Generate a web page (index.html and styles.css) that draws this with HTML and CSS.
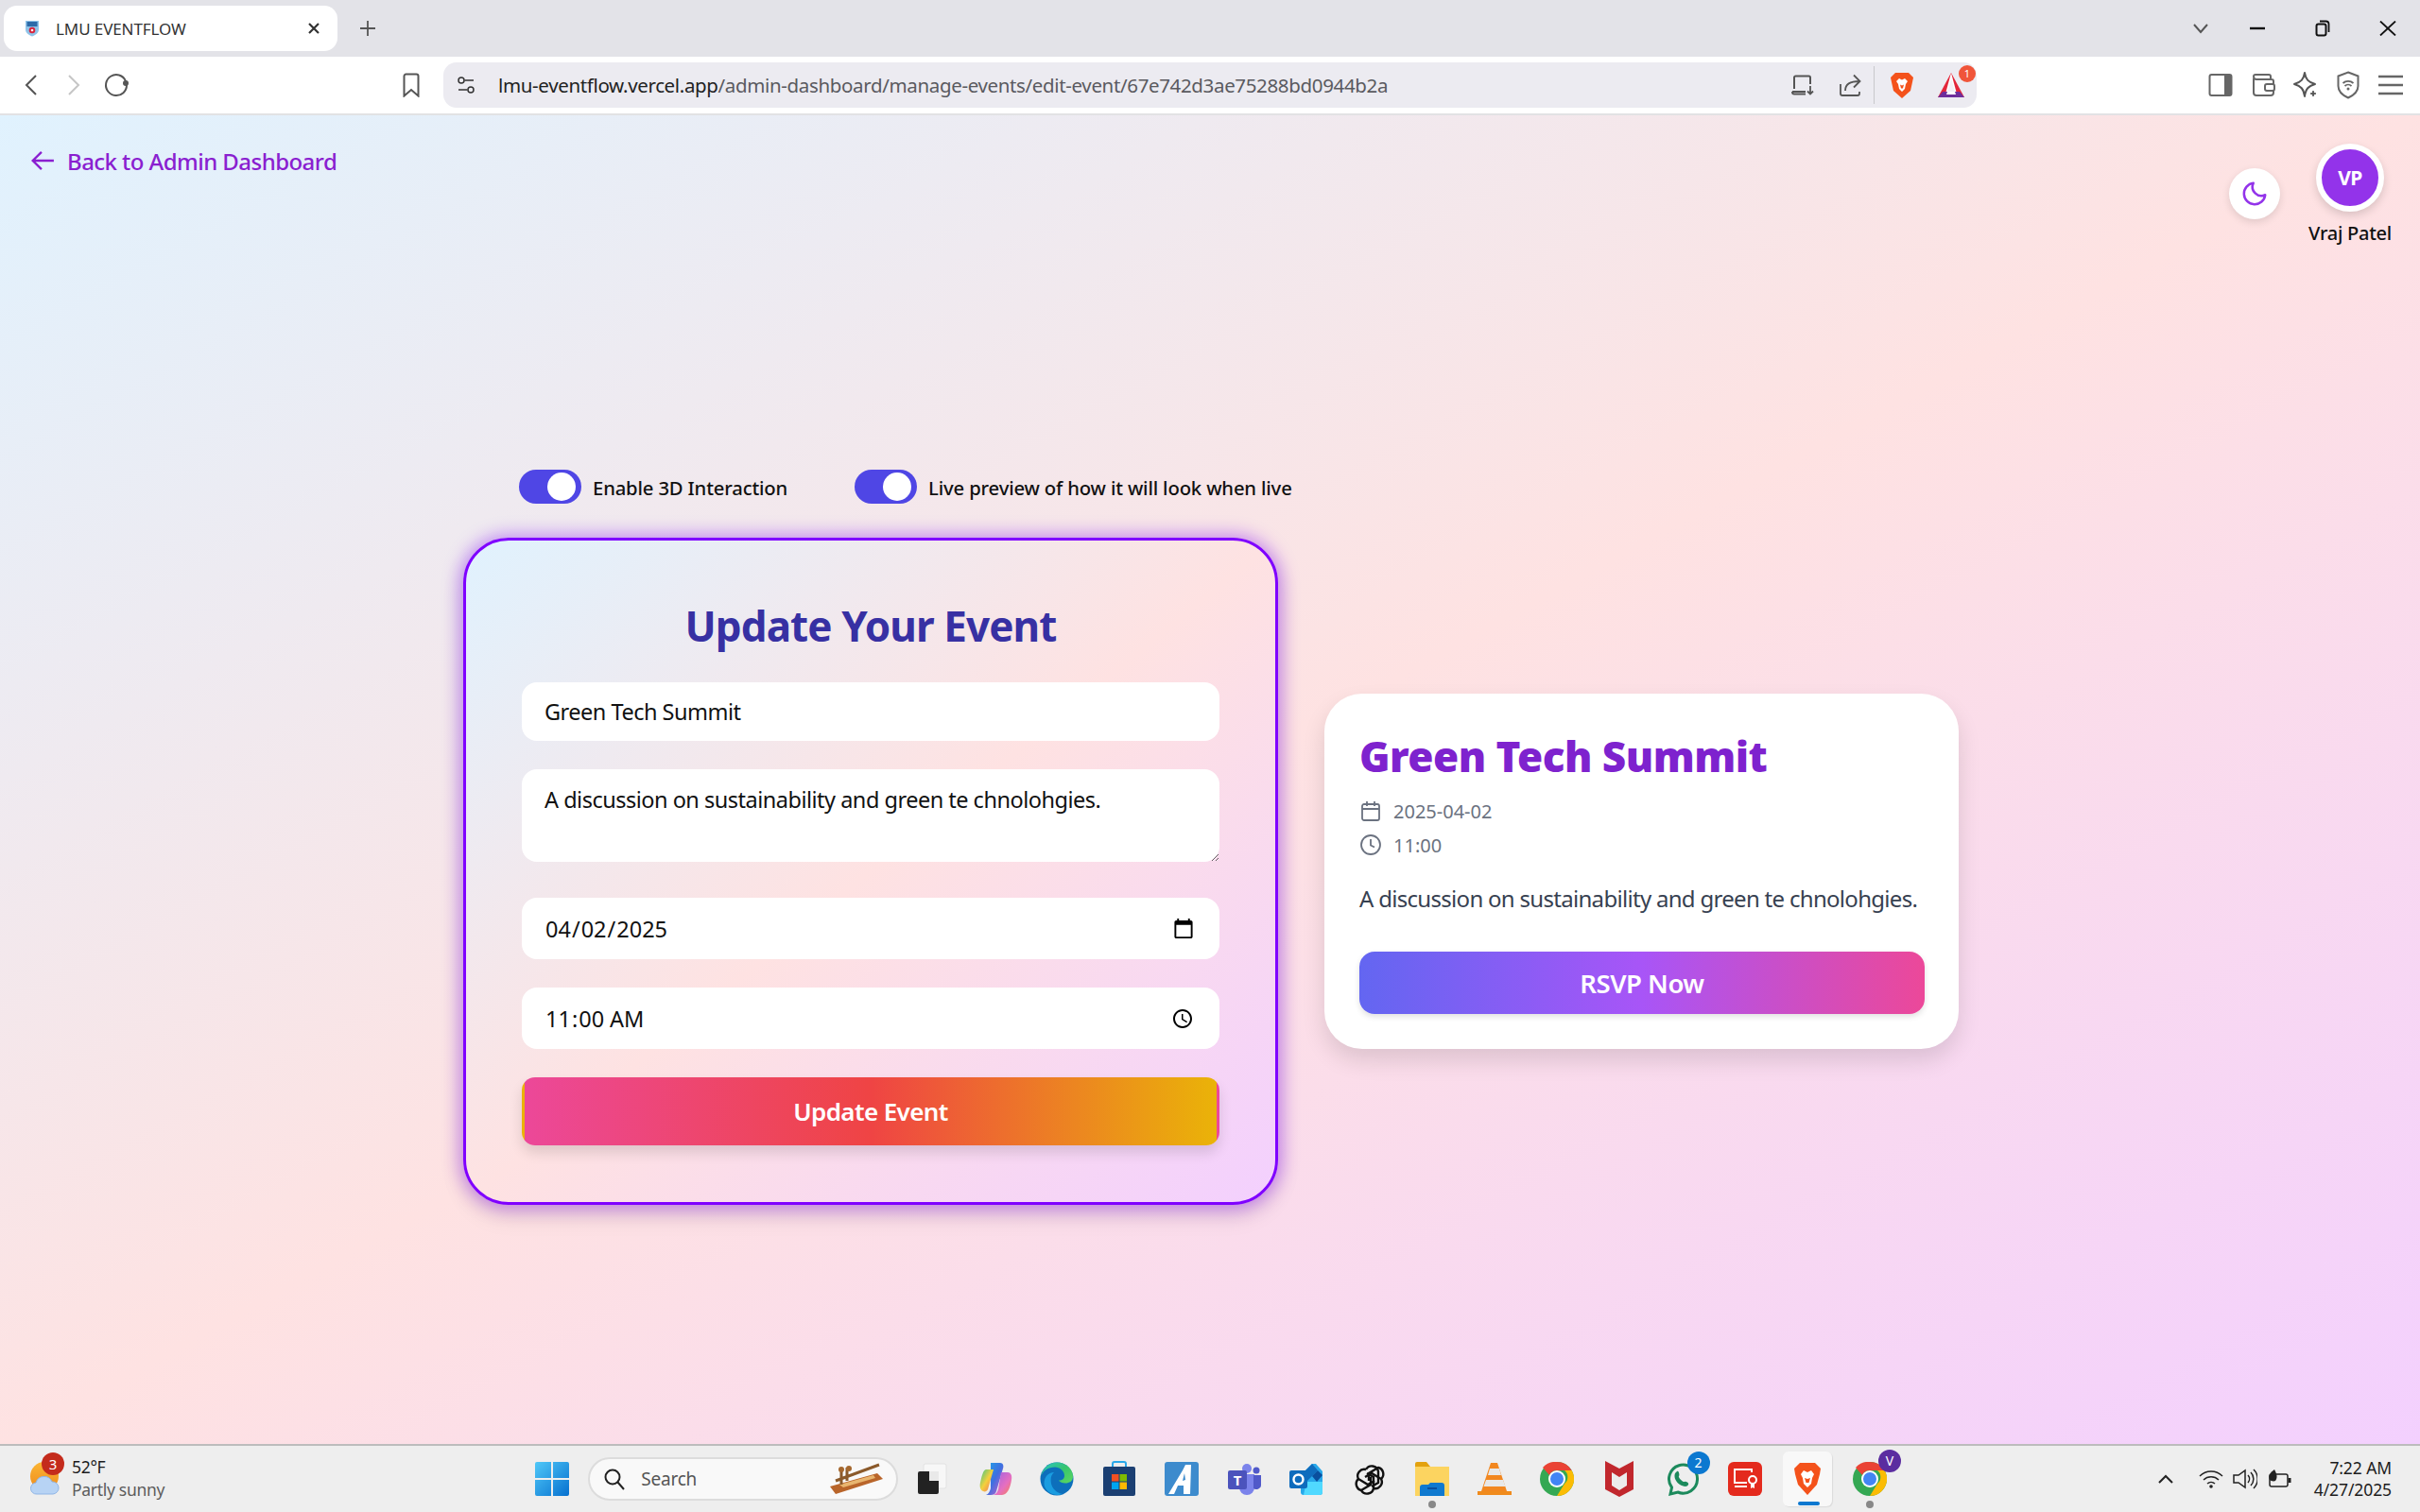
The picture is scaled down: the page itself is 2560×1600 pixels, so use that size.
FILE: index.html
```html
<!DOCTYPE html>
<html lang="en">
<head>
<meta charset="utf-8">
<title>LMU EVENTFLOW</title>
<link rel="stylesheet" href="styles.css">
</head>
<body>
<div class="screen">
  <div class="tabstrip">
    <div class="tab">
      <svg class="favicon" viewBox="0 0 16 18" width="16" height="18"><path d="M1 1h14v9c0 4-3.500 6-7 7.500C4.500 16 1 14 1 10z" fill="#8fc3e8"/><path d="M2.500 2h11v5h-11z" fill="#2d6aa8"/><circle cx="8" cy="11" r="3.300" fill="#d8243c"/><circle cx="8" cy="11" r="1.300" fill="#fff"/></svg>
      <span class="tab-title">LMU EVENTFLOW</span>
      <svg class="tab-close" viewBox="0 0 14 14" width="14" height="14"><path d="M2 2l10 10M12 2L2 12" stroke="#333" stroke-width="2.200"/></svg>
    </div>
    <svg class="tab-new" viewBox="0 0 18 18" width="18" height="18"><path d="M9 1v16M1 9h16" stroke="#555" stroke-width="1.800"/></svg>
    <div class="window-controls">
      <span class="win-slot"><svg viewBox="0 0 18 12" width="18" height="12"><path d="M2 2l7 8 7-8" fill="none" stroke="#555" stroke-width="2"/></svg></span>
      <span class="win-slot shift-l"><svg viewBox="0 0 16 4" width="16" height="4"><path d="M0 2h16" stroke="#111" stroke-width="2.400"/></svg></span>
      <span class="win-slot shift-s"><svg viewBox="0 0 16 18" width="16" height="18"><rect x="1.500" y="4.500" width="10" height="12" rx="2" fill="none" stroke="#111" stroke-width="2"/><path d="M5 1.500h6.500a3 3 0 0 1 3 3V13" fill="none" stroke="#111" stroke-width="1.800"/></svg></span>
      <span class="win-slot"><svg viewBox="0 0 18 16" width="18" height="16"><path d="M1 0.500l16 15M17 0.500l-16 15" stroke="#111" stroke-width="1.800"/></svg></span>
    </div>
  </div>

  <div class="toolbar">
    <span class="tool-slot"><svg viewBox="0 0 16 24" width="16" height="24"><path d="M13 2L3 12l10 10" fill="none" stroke="#555" stroke-width="2"/></svg></span>
    <span class="tool-slot"><svg viewBox="0 0 16 24" width="16" height="24"><path d="M3 2l10 10L3 22" fill="none" stroke="#c6c6c6" stroke-width="2"/></svg></span>
    <span class="tool-slot"><svg viewBox="0 0 26 26" width="26" height="26"><path d="M16 2.500A11 11 0 1 0 24 13" fill="none" stroke="#555" stroke-width="2"/><path d="M16 2.500A11 11 0 0 1 23 9" fill="none" stroke="#555" stroke-width="2"/><circle cx="23" cy="11" r="3" fill="#555"/></svg></span>
    <span class="tool-slot bookmark"><svg viewBox="0 0 20 26" width="20" height="26"><path d="M2.500 3.500a2 2 0 0 1 2-2h11a2 2 0 0 1 2 2v21L10 18l-7.500 6.500z" fill="none" stroke="#555" stroke-width="2"/></svg></span>
    <div class="address">
      <svg class="addr-site" viewBox="0 0 18 18" width="18" height="18"><circle cx="4" cy="4" r="3" fill="none" stroke="#333" stroke-width="1.500"/><path d="M7.500 4H17M1 14h9.500" stroke="#333" stroke-width="1.500"/><circle cx="14" cy="14" r="3" fill="none" stroke="#333" stroke-width="1.500"/></svg>
      <span class="url"><span class="url-host">lmu-eventflow.vercel.app</span>/admin-dashboard/manage-events/edit-event/67e742d3ae75288bd0944b2a</span>
      <div class="addr-actions">
        <svg viewBox="0 0 26 26" width="26" height="26"><path d="M4 17V5a1.500 1.500 0 0 1 1.500-1.500h14A1.500 1.500 0 0 1 21 5v7M2 20h14M2 20c0 1.500 1 2.500 2 2.500h12" fill="none" stroke="#555" stroke-width="2"/><path d="M21 14v8M18 19.500l3 3 3-3" fill="none" stroke="#555" stroke-width="1.800"/></svg>
        <svg viewBox="0 0 26 26" width="26" height="26"><path d="M3 12v10a2 2 0 0 0 2 2h16a2 2 0 0 0 2-2v-2M8 19c0-7 5-10 15-10M17 2.500l6.500 6.500-6.500 6.500" fill="none" stroke="#555" stroke-width="1.800"/></svg>
        <span class="addr-sep"></span>
        <svg viewBox="0 0 26 30" width="26" height="30"><path d="M6 2h14l3 3 2 2-1 5-2 9-9 8-9-8-2-9-1-5 2-2z" fill="#f4521b"/><path d="M7 11l3-3 3 1.500L16 8l3 3-2 3-1 5-3 3-3-3-1-5z" fill="#fff"/><path d="M11 14.500l2 1 2-1-1 4h-2z" fill="#f4521b"/></svg>
        <span class="rewards"><svg viewBox="0 0 30 30" width="30" height="30"><path d="M15 2L29 28H1z" fill="#e3263a"/><path d="M15 2L22 28H8z" fill="#fff"/><path d="M15 8l4 14h-8z" fill="#f3f0f7"/><path d="M6 22h18l5 6H1z" fill="#6e2e9b"/><path d="M11 22h8l1 3h-10z" fill="#fff"/></svg><span class="badge-brave">1</span></span>
      </div>
    </div>
    <div class="tool-right">
      <span class="tool-slot"><svg viewBox="0 0 26 26" width="26" height="26"><rect x="1.500" y="2" width="23" height="22" rx="2" fill="none" stroke="#666" stroke-width="2"/><rect x="17" y="2" width="7" height="22" fill="#666"/></svg></span>
      <span class="tool-slot"><svg viewBox="0 0 26 26" width="26" height="26"><path d="M3 6V21a3 3 0 0 0 3 3h15a3 3 0 0 0 3-3V9a2 2 0 0 0-2-2H6a3 3 0 0 1-3-3 2 2 0 0 1 2-2h14a2 2 0 0 1 2 2v3" fill="none" stroke="#666" stroke-width="2"/><rect x="15" y="12" width="10" height="7" rx="2" fill="#fff" stroke="#666" stroke-width="2"/></svg></span>
      <span class="tool-slot"><svg viewBox="0 0 28 30" width="28" height="30"><path d="M13 2c1 7 4 10 11 12-7 2-10 5-11 13-1-8-4-11-11-13 7-2 10-5 11-12z" fill="none" stroke="#555" stroke-width="2" stroke-linejoin="round"/><path d="M22 21c.4 2 1 2.700 3 3-2 .5-2.600 1-3 3-.4-2-1-2.500-3-3 2-.3 2.600-1 3-3z" fill="#555" stroke="#555"/></svg></span>
      <span class="tool-slot"><svg viewBox="0 0 26 30" width="26" height="30"><path d="M13 1.500l10.500 4V16c0 6-5 10-10.500 12.500C7.500 26 2.500 22 2.500 16V5.500z" fill="none" stroke="#666" stroke-width="2"/><path d="M7.500 13a8 8 0 0 1 11 0M9.500 16a5 5 0 0 1 7 0" fill="none" stroke="#666" stroke-width="1.800"/><circle cx="13" cy="19" r="1.500" fill="#666"/></svg></span>
      <span class="tool-slot"><svg viewBox="0 0 26 22" width="26" height="22"><path d="M0 2h26M0 11h26M0 20h26" stroke="#666" stroke-width="2.400"/></svg></span>
    </div>
  </div>

  <main class="page">
    <header class="topbar">
      <a class="back-link" href="#">
        <svg viewBox="0 0 24 24" width="26" height="26"><path d="M23 12H2M11 3.500L2.500 12l8.500 8.500" fill="none" stroke="#8a1fd0" stroke-width="2.200"/></svg>
        <span>Back to Admin Dashboard</span>
      </a>
      <div class="top-actions">
        <button class="theme-btn" type="button"><svg viewBox="0 0 24 24" width="30" height="30"><path d="M11 3a9 9 0 1 0 10 10 7.500 7.500 0 0 1-10-10z" fill="none" stroke="#9333ea" stroke-width="2" stroke-linejoin="round"/></svg></button>
        <div class="user">
          <div class="avatar">VP</div>
          <div class="user-name">Vraj Patel</div>
        </div>
      </div>
    </header>

    <section class="stage">
      <div class="toggles">
        <label class="toggle"><span class="switch"><span class="knob"></span></span><span>Enable 3D Interaction</span></label>
        <label class="toggle"><span class="switch"><span class="knob"></span></span><span>Live preview of how it will look when live</span></label>
      </div>
      <div class="editor">
        <form class="form-card">
          <h1 class="form-title">Update Your Event</h1>
          <input class="field field-title" type="text" value="Green Tech Summit">
          <textarea class="field field-area">A discussion on sustainability and green te chnolohgies.</textarea>
          <input class="field field-dt" type="date" value="2025-04-02">
          <input class="field field-dt" type="time" value="11:00">
          <button class="submit" type="button">Update Event</button>
        </form>
        <article class="preview">
          <h2 class="preview-title">Green Tech Summit</h2>
          <div class="meta">
            <svg viewBox="0 0 24 24" width="24" height="24"><rect x="3" y="5" width="18" height="17" rx="2" fill="none" stroke="#6b7280" stroke-width="1.800"/><path d="M3 10h18M8 2v5M16 2v5" stroke="#6b7280" stroke-width="1.800"/></svg>
            <span>2025-04-02</span>
          </div>
          <div class="meta">
            <svg viewBox="0 0 24 24" width="24" height="24"><circle cx="12" cy="12" r="10" fill="none" stroke="#6b7280" stroke-width="1.800"/><path d="M12 6v6.500l4 2" fill="none" stroke="#6b7280" stroke-width="1.800"/></svg>
            <span>11:00</span>
          </div>
          <p class="preview-desc">A discussion on sustainability and green te chnolohgies.</p>
          <button class="rsvp" type="button">RSVP Now</button>
        </article>
      </div>
    </section>
  </main>

  <footer class="taskbar">
    <div class="weather">
      <div class="weather-icon">
        <svg viewBox="0 0 36 36" width="36" height="36"><defs><linearGradient id="sun" x1="0" y1="0" x2="0" y2="1"><stop offset="0" stop-color="#fbb634"/><stop offset="1" stop-color="#ee8a1c"/></linearGradient></defs><circle cx="17" cy="15" r="15" fill="url(#sun)"/><path d="M9 34a6 6 0 0 1-1-12 9 9 0 0 1 17-1 6.500 6.500 0 0 1 1 13z" fill="#b7d3f4" stroke="#8fb5e6"/></svg>
        <span class="weather-badge">3</span>
      </div>
      <div class="weather-text">
        <div class="weather-temp">52°F</div>
        <div class="weather-desc">Partly sunny</div>
      </div>
    </div>
    <span class="task-slot"><svg viewBox="0 0 36 36" width="36" height="36"><defs><linearGradient id="win" x1="0" y1="0" x2="1" y2="1"><stop offset="0" stop-color="#4fc8f8"/><stop offset="1" stop-color="#0670cf"/></linearGradient></defs><path d="M0 2a2 2 0 0 1 2-2h15v17H0zM19 0h15a2 2 0 0 1 2 2v15H19zM0 19h17v17H2a2 2 0 0 1-2-2zM19 19h17v15a2 2 0 0 1-2 2H19z" fill="url(#win)"/></svg></span>
    <div class="search">
      <svg viewBox="0 0 24 24" width="24" height="24"><circle cx="10" cy="10" r="7.500" fill="none" stroke="#222" stroke-width="2"/><path d="M15.500 15.500L22 23" stroke="#222" stroke-width="2"/></svg>
      <span class="search-text">Search</span>
      <svg class="search-art" viewBox="0 0 60 36" width="60" height="36"><path d="M2 26l50-14 6 6-50 16z" fill="#b9652a"/><path d="M12 24l36-10 2 3-34 10z" fill="#e8b56f"/><path d="M8 20l46-17M14 8v16M20 6v14" stroke="#8b5a2b" stroke-width="3"/><circle cx="14" cy="8" r="3" fill="#a5682f"/><circle cx="22" cy="7" r="3" fill="#a5682f"/></svg>
    </div>
    <span class="task-slot nudge"><svg viewBox="0 0 36 36" width="36" height="36"><rect x="8" y="2" width="24" height="26" rx="2" fill="#f7f7f7" stroke="#e2e2e2"/><rect x="2" y="10" width="22" height="24" rx="2" fill="#222"/><rect x="14" y="10" width="10" height="10" fill="#e9e9e9"/></svg></span>
    <span class="task-slot nudge"><svg viewBox="0 0 36 36" width="36" height="36"><defs><linearGradient id="cp1" x1="0" y1="0" x2="1" y2="1"><stop offset="0" stop-color="#20a4e8"/><stop offset="0.5" stop-color="#3f6fe0"/><stop offset="1" stop-color="#d95dc8"/></linearGradient><linearGradient id="cp2" x1="0" y1="0" x2="1" y2="1"><stop offset="0" stop-color="#37c58a"/><stop offset="0.5" stop-color="#f4d13d"/><stop offset="1" stop-color="#f3655a"/></linearGradient><linearGradient id="cp3" x1="0" y1="0" x2="1" y2="1"><stop offset="0" stop-color="#9a62e6"/><stop offset="0.6" stop-color="#e66fc0"/><stop offset="1" stop-color="#f7804f"/></linearGradient></defs><path d="M13 1h10c3 0 4 3 3 6l-7 24c-1 3-3 4-6 4H8c3-1 4-4 5-7z" fill="url(#cp1)"/><path d="M8 8h8l-6 21c-1 2-3 3-5 2-3-1-4-5-3-9 1-5 3-14 6-14z" fill="url(#cp2)"/><path d="M24 11h7c3 0 5 3 4 8-1 7-4 16-10 16h-9c3-1 4-3 5-6z" fill="url(#cp3)"/></svg></span>
    <span class="task-slot"><svg viewBox="0 0 36 36" width="36" height="36"><defs><linearGradient id="edge" x1="0" y1="0" x2="1" y2="1"><stop offset="0" stop-color="#2dc3c8"/><stop offset="0.5" stop-color="#35c46f"/><stop offset="1" stop-color="#5ed85e"/></linearGradient></defs><circle cx="18" cy="18" r="17.500" fill="#0d6fbb"/><path d="M1 16C3 6 10 .5 18 .5c10 0 17 7 17 15 0 5-4 7-8 7-3 0-6-1-7-3 4 0 6-2 6-5 0-5-5-9-10-9C9 5.500 3 9 1 16z" fill="url(#edge)"/><path d="M5 26c-2-8 3-15 10-15-3 3-4 6-3 12 1 5 6 10 12 11-8 3-16-1-19-8z" fill="#1a9ce0"/></svg></span>
    <span class="task-slot"><svg viewBox="0 0 36 38" width="36" height="38"><path d="M11 7V3a2 2 0 0 1 2-2h10a2 2 0 0 1 2 2v4" fill="none" stroke="#28a8ea" stroke-width="2"/><rect x="1" y="6" width="34" height="31" rx="2" fill="#1b3f72"/><rect x="10" y="14" width="7.500" height="7.500" fill="#f25022"/><rect x="18.500" y="14" width="7.500" height="7.500" fill="#7fba00"/><rect x="10" y="22.500" width="7.500" height="7.500" fill="#00a4ef"/><rect x="18.500" y="22.500" width="7.500" height="7.500" fill="#ffb900"/></svg></span>
    <span class="task-slot"><svg viewBox="0 0 36 36" width="36" height="36"><rect width="36" height="36" rx="3" fill="#3d8bcd"/><path d="M4 34L19 9l3-6 6 0-1 31h-7l0-9-6 0-4 9z" fill="#fff"/><path d="M19 20l3-1-1-7z" fill="#3d8bcd"/></svg></span>
    <span class="task-slot"><svg viewBox="0 0 36 36" width="36" height="36"><circle cx="21" cy="7" r="5" fill="#7b83eb"/><circle cx="31" cy="9" r="3.500" fill="#5059c9"/><path d="M13 13h16v14a8 8 0 0 1-16 0z" fill="#7b83eb"/><path d="M28 14h8v11a5 5 0 0 1-8 3z" fill="#5059c9"/><rect x="1" y="9" width="20" height="20" rx="2" fill="#4b53bc"/><text x="11" y="25" class="svg-t">T</text></svg></span>
    <span class="task-slot"><svg viewBox="0 0 36 36" width="36" height="36"><path d="M12 14L24 2h4l7 8v22a3 3 0 0 1-3 3H15a3 3 0 0 1-3-3z" fill="#28a8ea"/><path d="M12 14L24 2l6 7-12 12z" fill="#0f6cbd"/><path d="M24 15l6-6 5 5-6 7z" fill="#0a4f9e"/><path d="M18 21h17v11a3 3 0 0 1-3 3H15z" fill="#50d9ff"/><rect x="0" y="9" width="19" height="19" rx="2" fill="#0f6cbd"/><circle cx="9.500" cy="18.500" r="5" fill="none" stroke="#fff" stroke-width="2.400"/></svg></span>
    <span class="task-slot"><svg viewBox="0 0 36 38" width="36" height="38"><g fill="none" stroke="#111" stroke-width="2.400"><path d="M14 9a7 7 0 0 1 13 2v12l-7 4"/><path d="M14 9a7 7 0 0 0-8 10l10 6 7-4"/><path d="M6 19a7 7 0 0 0 3 12l10-6v-8"/><path d="M9 31a7 7 0 0 0 13-2V17l-7-4"/><path d="M22 29a7 7 0 0 0 8-10l-10-6-7 4"/><path d="M30 19a7 7 0 0 0-3-12l-10 6v8"/></g></svg></span>
    <span class="task-slot"><svg viewBox="0 0 36 36" width="36" height="36"><path d="M0 2a2 2 0 0 1 2-2h10l4 5h-16z" fill="#e3a20f"/><rect y="5" width="36" height="31" fill="#fcd460"/><path d="M5 36V27a3 3 0 0 1 3-3h6l2-2h12a3 3 0 0 1 3 3v11z" fill="#0f79cf"/><rect x="13" y="27" width="10" height="2" fill="#0a4f9e"/></svg><i class="dot"></i></span>
    <span class="task-slot"><svg viewBox="0 0 36 38" width="36" height="38"><path d="M14 2h7l10 30H4z" fill="#f2871f"/><path d="M13 8h10l2 7H11zM9 20h18l2.500 7h-23z" fill="#e8e8e8"/><path d="M0 32h36v4H0z" fill="#f08b1c"/></svg></span>
    <span class="task-slot"><svg viewBox="0 0 36 36" width="36" height="36"><circle cx="18" cy="18" r="18" fill="#34a853"/><path d="M18 0a18 18 0 0 1 15.600 9H18a9 9 0 0 0-8 5L3 6A18 18 0 0 1 18 0z" fill="#ea4335"/><path d="M33.600 9A18 18 0 0 1 18 36l8-13a9 9 0 0 0 0-14z" fill="#fbbc04"/><circle cx="18" cy="18" r="9" fill="#fff"/><circle cx="18" cy="18" r="7" fill="#4285f4"/></svg></span>
    <span class="task-slot"><svg viewBox="0 0 36 38" width="36" height="38"><path d="M3 0l15 8 15-8v30l-15 8-15-8z" fill="#c1272d"/><path d="M10 12l8 5 8-5v14l-8 5-8-5z" fill="#ececec"/></svg></span>
    <span class="task-slot"><svg viewBox="0 0 38 38" width="38" height="38"><path d="M6 35l1.500-7A15 15 0 1 1 14 33z" fill="none" stroke="#1c8a5c" stroke-width="3"/><path d="M13 11c2-1 3 4 2 5s3 6 6 6c1-1 5 1 4 3-1 3-6 2-9 0s-7-7-5-12z" fill="#1c8a5c"/></svg><span class="task-badge blue">2</span></span>
    <span class="task-slot"><svg viewBox="0 0 36 36" width="36" height="36"><rect width="36" height="36" rx="6" fill="#e42a1d"/><path d="M25 11V8H7v14h13M7 26h13" fill="none" stroke="#fff" stroke-width="2"/><circle cx="26" cy="19" r="4" fill="none" stroke="#fff" stroke-width="2"/><path d="M24 23v5l2-1 2 1v-5" fill="#fff"/></svg></span>
    <span class="task-slot active"><svg viewBox="0 0 30 36" width="30" height="36"><path d="M7 1h16l3 3 3 3-1 6-3 11-10 11L5 24 2 13 1 7l3-3z" fill="#f4521b"/><path d="M8 13l3-4 4 2 4-2 3 4-2 4-1 6-4 4-4-4-1-6z" fill="#fff"/><path d="M12 17l3 1 3-1-1.500 5h-3z" fill="#f4521b"/></svg><i class="indicator"></i></span>
    <span class="task-slot"><svg viewBox="0 0 36 36" width="36" height="36"><circle cx="18" cy="18" r="18" fill="#34a853"/><path d="M18 0a18 18 0 0 1 15.600 9H18a9 9 0 0 0-8 5L3 6A18 18 0 0 1 18 0z" fill="#ea4335"/><path d="M33.600 9A18 18 0 0 1 18 36l8-13a9 9 0 0 0 0-14z" fill="#fbbc04"/><circle cx="18" cy="18" r="9" fill="#fff"/><circle cx="18" cy="18" r="7" fill="#4285f4"/></svg><span class="task-badge violet">V</span><i class="dot"></i></span>
    <div class="tray">
      <svg class="tray-chevron" viewBox="0 0 18 12" width="18" height="12"><path d="M2 10l7-7 7 7" fill="none" stroke="#222" stroke-width="2"/></svg>
      <span class="tray-slot"><svg viewBox="0 0 26 20" width="26" height="20"><path d="M1 7a17 17 0 0 1 24 0M5 11a11.500 11.500 0 0 1 16 0M9 15a6 6 0 0 1 8 0" fill="none" stroke="#222" stroke-width="1.500"/><circle cx="13" cy="18" r="1.800" fill="#222"/></svg></span>
      <span class="tray-slot"><svg viewBox="0 0 26 22" width="26" height="22"><path d="M1 7h5l7-5v18l-7-5H1z" fill="none" stroke="#222" stroke-width="1.500"/><path d="M16 7a6 6 0 0 1 0 8M19 4a10 10 0 0 1 0 14M22 1a14 14 0 0 1 0 20" fill="none" stroke="#222" stroke-width="1.500"/></svg></span>
      <span class="tray-slot"><svg viewBox="0 0 26 22" width="26" height="22"><rect x="3" y="6" width="19" height="13" rx="2" fill="none" stroke="#222" stroke-width="1.500"/><rect x="22.500" y="10" width="3" height="5" fill="#222"/><path d="M8 1c-4 3-7 6-5 11 1 1 4 2 6 1 3-4 1-8-1-12z" fill="#222"/></svg></span>
      <div class="clock"><div>7:22 AM</div><div>4/27/2025</div></div>
    </div>
  </footer>
</div>
</body>
</html>
```
FILE: styles.css
```css
* { box-sizing: border-box; }
html, body { margin: 0; padding: 0; height: 100%; }
body { font-family: "Noto Sans", "Open Sans", sans-serif; color: #111; overflow: hidden; }
.screen { width: 2560px; height: 1600px; display: flex; flex-direction: column; }

/* tab strip */
.tabstrip { height: 60px; flex: none; background: #e3e3e8; display: flex; align-items: flex-start; }
.tab { width: 353px; height: 48px; margin: 6px 0 0 4px; padding: 0 16px 0 22px; background: #fff; border-radius: 14px; display: flex; align-items: center; }
.favicon { flex: none; }
.tab-title { margin-left: 17px; font-size: 17px; letter-spacing: -0.1px; color: #333; }
.tab-close { margin-left: auto; margin-right: 2px; }
.tab-new { margin: 21px 0 0 23px; }
.window-controls { margin-left: auto; margin-right: 1px; display: flex; height: 60px; }
.win-slot { width: 66px; height: 60px; display: flex; align-items: center; justify-content: center; }
.shift-l { padding-right: 12px; }
.shift-s { padding-right: 6px; }

/* toolbar */
.toolbar { height: 62px; flex: none; background: #fff; border-bottom: 2px solid #e2e2e4; padding: 0 9px 0 10px; display: flex; align-items: center; }
.tool-slot { width: 45px; height: 44px; flex: none; display: flex; align-items: center; justify-content: center; }
.bookmark { margin-left: 267px; }
.address { width: 1622px; height: 48px; margin-left: 12px; padding: 0 10px 0 15px; background: #ecebf1; border-radius: 14px; display: flex; align-items: center; }
.addr-site { flex: none; }
.url { margin-left: 25px; font-size: 20.500px; letter-spacing: -0.35px; color: #5a5a5f; white-space: nowrap; }
.url-host { color: #222; }
.addr-actions { margin-left: auto; display: flex; align-items: center; }
.addr-actions > svg:nth-child(2) { margin-left: 24px; }
.addr-sep { width: 1px; height: 40px; margin: 0 16px 0 12px; background: #c8c8cc; }
.rewards { position: relative; margin-left: 24px; width: 32px; height: 30px; }
.badge-brave { position: absolute; top: -6px; right: -9px; width: 18px; height: 18px; border-radius: 50%; background: #f0553a; color: #fff; font-size: 11px; line-height: 18px; text-align: center; }
.tool-right { margin-left: auto; display: flex; }

/* page */
.page { flex: 1; min-height: 0; background: linear-gradient(to bottom right, #e0f2fe 0%, #fee2e2 50%, #f3d0fe 100%); }
.topbar { height: 136px; padding: 30px 30px 0 32px; display: flex; justify-content: space-between; align-items: flex-start; }
.back-link { height: 36px; display: flex; align-items: center; gap: 13px; color: #8a1fd0; font-size: 24px; font-weight: 500; letter-spacing: -0.55px; text-decoration: none; }
.top-actions { display: flex; align-items: flex-start; gap: 30px; }
.theme-btn { width: 54px; height: 54px; margin-top: 26px; padding: 0; border: 0; border-radius: 50%; background: #fff; box-shadow: 0 3px 8px rgba(0,0,0,.12); display: flex; align-items: center; justify-content: center; }
.user { width: 88px; display: flex; flex-direction: column; align-items: center; }
.avatar { width: 72px; height: 72px; border: 6px solid #fff; border-radius: 50%; background: #9333ea; color: #fff; font-size: 21px; font-weight: 700; display: flex; align-items: center; justify-content: center; box-shadow: 0 4px 10px rgba(0,0,0,.15); letter-spacing: -0.5px; }
.user-name { margin-top: 9px; font-size: 20px; line-height: 28px; font-weight: 500; white-space: nowrap; letter-spacing: -0.25px; color: #111; }

.stage { margin: 0 0 0 490px; padding-top: 239px; }
.toggles { display: flex; padding-left: 59px; height: 36px; }
.toggle { display: flex; align-items: center; gap: 12px; font-size: 20.300px; font-weight: 500; letter-spacing: -0.17px; color: #111; }
.toggle + .toggle { margin-left: 71px; }
.switch { width: 66px; height: 36px; padding: 3px 6px 3px 3px; background: #4f46e5; border-radius: 18px; display: flex; justify-content: flex-end; }
.knob { width: 30px; height: 30px; border-radius: 50%; background: #fff; }
.toggle > span:last-child { position: relative; top: 1px; }

.editor { margin-top: 36px; display: flex; align-items: center; gap: 49px; }
.form-card { width: 862px; height: 706px; padding: 55px 59px 0; border: 3px solid #7f00ff; border-radius: 48px; background: linear-gradient(to bottom right, #e0f2fe 0%, #fee2e2 50%, #f3d0fe 100%); box-shadow: 0 0 18px 4px rgba(127,0,255,.38), 0 12px 24px rgba(0,0,0,.1); display: flex; flex-direction: column; }
.form-title { margin: 0 0 24px; height: 71px; line-height: 71px; text-align: center; font-size: 44px; font-weight: 700; letter-spacing: -0.9px; color: #3730a3; }
.field { display: block; width: 100%; border: 0; outline: 0; border-radius: 16px; background: #fff; font-family: "Noto Sans", "Open Sans", sans-serif; font-size: 23.500px; color: #111; letter-spacing: -0.5px; padding: 0 24px; }
.field-title { height: 62px; }
.field-area { height: 98px; margin-top: 30px; padding-top: 16px; line-height: 32px; resize: vertical; }
.field-dt { height: 65px; margin-top: 38px; letter-spacing: 0; }
.field-dt + .field-dt { margin-top: 30px; }
.field-dt::-webkit-calendar-picker-indicator { width: 24px; height: 24px; margin-right: 0; }
.submit { height: 72px; margin-top: 30px; border: 3px solid transparent; border-radius: 14px; background: linear-gradient(90deg, #ec4899, #ef4444, #eab308); color: #fff; font-family: inherit; font-size: 26px; font-weight: 600; letter-spacing: -0.6px; box-shadow: 0 8px 14px rgba(0,0,0,.12); }

.preview { width: 671px; height: 376px; padding: 36px 37px 0; border-radius: 40px; background: #fff; box-shadow: 0 12px 24px rgba(0,0,0,.12); }
.preview-title { margin: 0 0 14px; height: 56px; line-height: 60px; font-size: 44px; font-weight: 900; letter-spacing: -0.5px; color: #7e22ce; white-space: nowrap; }
.meta { height: 36px; display: flex; align-items: center; gap: 12px; color: #6b7280; font-size: 20px; letter-spacing: 0; }
.preview-desc { margin: 17px 0 0; height: 44px; line-height: 44px; font-size: 24px; color: #374151; letter-spacing: -0.7px; white-space: nowrap; }
.rsvp { display: block; width: 598px; height: 66px; margin-top: 34px; border: 0; border-radius: 16px; background: linear-gradient(90deg, #6366f1, #a855f7, #ec4899); color: #fff; font-family: inherit; font-size: 27.500px; font-weight: 600; letter-spacing: -0.5px; box-shadow: 0 3px 6px rgba(0,0,0,.12); }

/* taskbar */
.taskbar { height: 72px; flex: none; background: #eeeeee; border-top: 2px solid #bcbcbc; display: flex; align-items: center; }
.weather { width: 551px; flex: none; padding-left: 30px; display: flex; align-items: center; gap: 10px; }
.weather-icon { position: relative; width: 36px; height: 36px; }
.weather-badge { position: absolute; left: 14px; top: -10px; width: 24px; height: 24px; border-radius: 50%; background: #c42b1c; color: #fff; font-size: 15px; line-height: 24px; text-align: center; }
.weather-text { font-size: 17.500px; line-height: 24px; margin-top: -3px; letter-spacing: -0.3px; }
.weather-temp { color: #1c1c1c; }
.weather-desc { color: #5c5c5c; }
.task-slot { position: relative; width: 66.200px; height: 70px; flex: none; display: flex; align-items: center; justify-content: center; }
.nudge { padding-left: 4px; }
.search { width: 328px; height: 46px; margin: 0 2px 0 5px; flex: none; padding: 0 12px 0 14px; background: #f9f9f9; border: 2px solid #dcdcdc; border-radius: 23px; display: flex; align-items: center; }
.search-text { margin-left: 16px; font-size: 19px; color: #555; letter-spacing: -0.2px; }
.search-art { margin-left: auto; }
.svg-t { font-family: "Noto Sans", sans-serif; font-size: 15px; font-weight: 700; fill: #fff; text-anchor: middle; }
.dot { position: absolute; left: 29px; bottom: 4px; width: 8px; height: 8px; border-radius: 50%; background: #888; }
.active { background: #f8f8f8; border-radius: 6px; height: 58px; width: 52px; margin: 0 7px; box-shadow: 1px 1px 1px rgba(0,0,0,.08); }
.indicator { position: absolute; left: 16px; bottom: 1px; width: 23px; height: 4px; border-radius: 2px; background: #0b78d0; }
.task-badge { position: absolute; top: 6px; right: 4px; width: 24px; height: 24px; border-radius: 50%; color: #fff; font-size: 14px; line-height: 24px; text-align: center; }
.blue { background: #0b78d0; }
.violet { background: #5b2da0; top: 4px; right: 0; }
.tray { margin-left: auto; padding-right: 30px; display: flex; align-items: center; }
.tray-chevron { margin-right: 21px; }
.tray-slot { width: 36px; display: flex; justify-content: center; }
.clock { margin-left: 19px; text-align: right; font-size: 17.500px; line-height: 23px; color: #1c1c1c; letter-spacing: -0.1px; }
```
